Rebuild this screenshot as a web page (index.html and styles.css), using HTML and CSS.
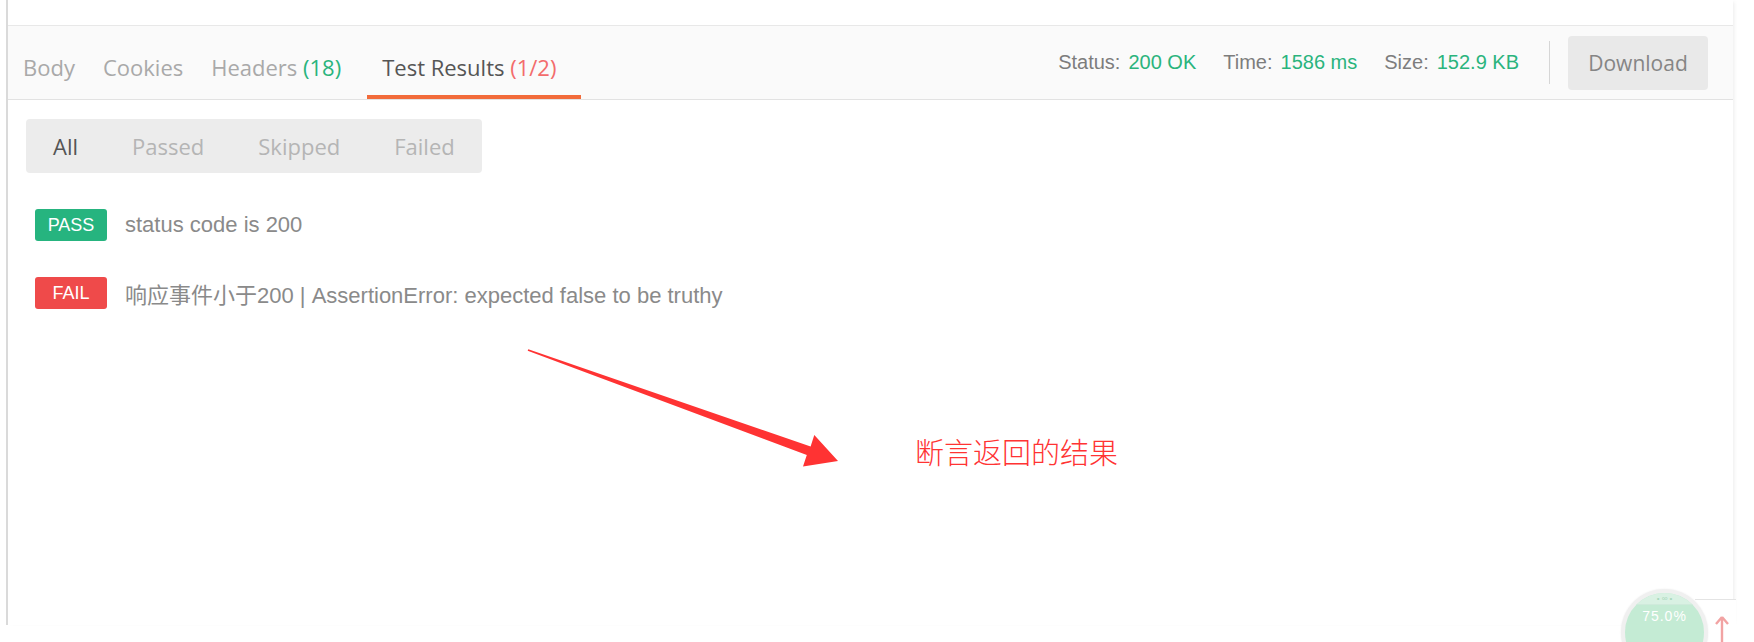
FILE: index.html
```html
<!DOCTYPE html>
<html lang="zh">
<head>
<meta charset="utf-8">
<title>Test Results</title>
<link rel="stylesheet" href="styles.css">
</head>
<body>
<div class="pane">
  <div class="tabbar">
    <nav class="tabs">
      <div class="tab">Body</div>
      <div class="tab">Cookies</div>
      <div class="tab">Headers <span class="count-ok">(18)</span></div>
      <div class="tab active">Test Results <span class="count-bad">(1/2)</span></div>
    </nav>
    <div class="meta">
      <div class="stat"><span>Status:</span><span class="val">200 OK</span></div>
      <div class="stat"><span>Time:</span><span class="val">1586 ms</span></div>
      <div class="stat"><span>Size:</span><span class="val">152.9 KB</span></div>
      <div class="sep"></div>
      <div class="download">Download</div>
    </div>
  </div>
  <div class="content">
    <div class="filters">
      <div class="filter on">All</div>
      <div class="filter">Passed</div>
      <div class="filter">Skipped</div>
      <div class="filter">Failed</div>
    </div>
    <div class="results">
      <div class="row"><span class="badge pass">PASS</span><span class="msg">status code is 200</span></div>
      <div class="row"><span class="badge fail">FAIL</span><span class="msg">响应事件小于200 | AssertionError: expected false to be truthy</span></div>
    </div>
  </div>
</div>

<svg class="arrow" width="1754" height="642" viewBox="0 0 1754 642" xmlns="http://www.w3.org/2000/svg">
  <polygon points="528.3,349.2 810.6,446.6 814.3,435.0 838,461 803.0,466.6 806.8,454.9 527.7,350.8" fill="#ff3333"/>
</svg>
<div class="note">断言返回的结果</div>

<div class="widget">
  <div class="corner-box"></div>
  <div class="gauge">
    <div class="gauge-top">• ∞ •</div>
    <div class="gauge-val">75.0%</div>
  </div>
  <svg class="up" width="14" height="26" viewBox="0 0 14 26" xmlns="http://www.w3.org/2000/svg">
    <path d="M7 1 L1 8 M7 1 L13 8 M7 1 L7 26" stroke="#f2a3a3" stroke-width="2.4" fill="none"/>
  </svg>
</div>
</body>
</html>
```

FILE: styles.css
```css
html, body {
  margin: 0;
  padding: 0;
  overflow: hidden;
}
body {
  width: 1754px;
  height: 642px;
  background: #ffffff;
  position: relative;
  font-family: "Liberation Sans", Arial, "Noto Sans CJK SC", sans-serif;
}

.pane {
  margin-left: 6px;
  width: 1727px;
  height: 625px;
  border-left: 2px solid #dadada;
  box-shadow: 3px 0 4px -2px rgba(0, 0, 0, 0.08);
  padding-top: 25px;
  box-sizing: border-box;
}

.tabbar {
  display: flex;
  height: 75px;
  box-sizing: border-box;
  border-top: 1px solid #e8e8e8;
  border-bottom: 1px solid #e2e2e2;
  background: #fafafa;
}
.tabs {
  display: flex;
  padding-left: 1px;
}
.tab {
  display: flex;
  align-items: center;
  padding: 13px 14px 0;
  border-bottom: 4px solid transparent;
  font-family: "Open Sans", sans-serif;
  font-size: 22px;
  color: #a9a9a9;
  white-space: pre;
}
.tab.active {
  color: #555555;
  border-bottom-color: #f26b3a;
  margin-left: 12px;
  padding-left: 15px;
  padding-right: 25px;
}
.count-ok { color: #2ab47d; }
.count-bad { color: #f36c6c; }

.meta {
  margin-left: auto;
  display: flex;
  align-items: center;
  padding-right: 25px;
  font-size: 20px;
  color: #7d7d7d;
}
.stat {
  display: flex;
  gap: 8px;
  margin-left: 27px;
}
.stat .val { color: #2ab47d; }
.sep {
  width: 1px;
  height: 43px;
  background: #d6d6d6;
  margin: 0 18px 0 30px;
}
.download {
  width: 140px;
  height: 54px;
  border-radius: 4px;
  background: #e9e9e9;
  display: flex;
  align-items: center;
  justify-content: center;
  font-family: "Open Sans", sans-serif;
  font-size: 21px;
  color: #858585;
}

.content {
  padding: 19px 0 0 18px;
}
.filters {
  display: inline-flex;
  height: 54px;
  background: #ececec;
  border-radius: 4px;
}
.filter {
  display: flex;
  align-items: center;
  padding: 0 27px;
  font-family: "Open Sans", sans-serif;
  font-size: 22px;
  color: #b5b5b5;
}
.filter.on { color: #555555; }

.results {
  display: flex;
  flex-direction: column;
  gap: 36px;
  margin: 36px 0 0 9px;
}
.row {
  display: flex;
  align-items: center;
  gap: 18px;
  height: 32px;
  font-size: 22px;
  color: #8a8a8a;
}
.badge {
  width: 72px;
  height: 32px;
  border-radius: 3px;
  color: #ffffff;
  font-size: 18px;
  display: flex;
  align-items: center;
  justify-content: center;
}
.pass { background: #26b47f; }
.fail { background: #ef4a4a; }

/* annotation overlay */
.arrow {
  position: absolute;
  left: 0;
  top: 0;
  pointer-events: none;
}
.note {
  position: absolute;
  left: 915px;
  top: 436px;
  font-family: "Noto Sans CJK SC", sans-serif;
  font-size: 29px;
  line-height: 30px;
  color: #ff3333;
  font-weight: 300;
}

/* floating widget at bottom right, clipped by the frame */
.widget {
  position: absolute;
  left: 1615px;
  top: 583px;
  width: 139px;
  height: 59px;
  overflow: hidden;
}
.corner-box {
  position: absolute;
  left: 80px;
  top: 16px;
  width: 41px;
  height: 43px;
  border-top: 1px solid #e4e4e4;
  background: #ffffff;
}
.gauge {
  position: absolute;
  left: 6px;
  top: 6px;
  width: 87px;
  height: 87px;
  box-sizing: border-box;
  border-radius: 50%;
  border: 4px solid #f0f0f0;
  box-shadow: 0 0 2px rgba(0, 0, 0, 0.08);
  background: #c4ebd4;
  overflow: hidden;
  text-align: center;
  color: #ffffff;
}
.gauge-top {
  height: 11px;
  background: #d9f1e3;
  border-bottom: 1px solid #cfeadb;
  font-size: 8px;
  line-height: 11px;
  color: #a9d8bd;
}
.gauge-val {
  font-size: 14px;
  line-height: 22px;
  letter-spacing: 1px;
}
.up {
  position: absolute;
  left: 100px;
  top: 33px;
}
```
